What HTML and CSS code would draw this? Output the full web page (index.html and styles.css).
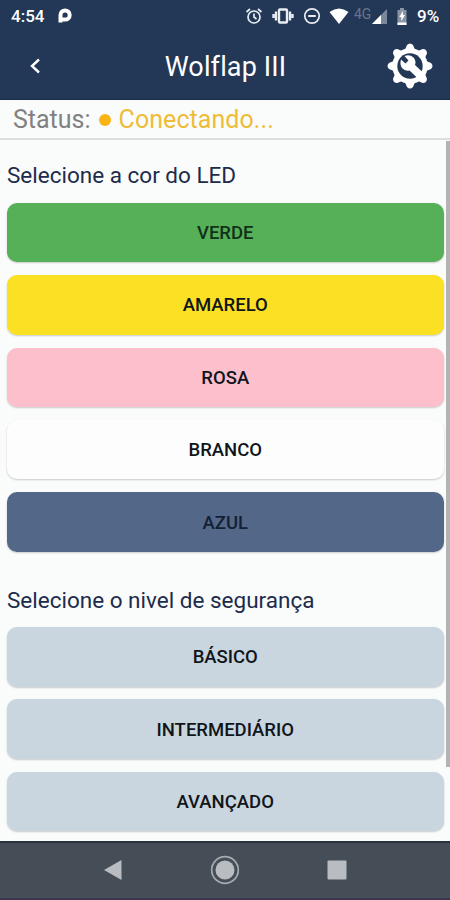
FILE: index.html
```html
<!DOCTYPE html>
<html lang="pt">
<head>
<meta charset="utf-8">
<title>Wolflap III</title>
<link rel="stylesheet" href="styles.css">
</head>
<body>
<div class="phone">
  <header class="header">
    <div class="system-bar">
      <span class="clock">4:54</span>
      <svg class="parking" width="14" height="16" viewBox="0 0 14 16"><path d="M2.500 14.500V7a4.600 4.600 0 1 1 4.600 4.600H4" fill="none" stroke="#fff" stroke-width="4" stroke-linejoin="round"/></svg>
      <div class="indicators">
        <svg width="18" height="18" viewBox="0 0 18 18" fill="none" stroke="#e8edf4" stroke-width="1.700"><circle cx="9" cy="10" r="6"/><path d="M1.500 5 5 2M16.500 5 13 2M9 6.500V10l2.500 2"/></svg>
        <svg width="22" height="18" viewBox="0 0 22 18" fill="none" stroke="#e8edf4" stroke-width="2.400"><rect x="7" y="2.500" width="8" height="13" rx="1"/><path d="M4 4.500v9M1.500 7v4M18 4.500v9M20.500 7v4"/></svg>
        <svg width="18" height="18" viewBox="0 0 18 18" fill="none" stroke="#e8edf4" stroke-width="1.700"><circle cx="9" cy="9" r="7.200"/><path d="M5.200 9h7.600" stroke-width="2"/></svg>
        <svg width="20" height="18" viewBox="0 0 20 18"><path d="M.5 5Q10-2 19.500 5L10 17Z" fill="#fff"/></svg>
        <span class="network">4G</span>
        <svg class="signal" width="15" height="15" viewBox="0 0 15 15"><path d="M15 0v15H0Z" fill="#7b889c"/><path d="M9 6v9H0Z" fill="#fff"/></svg>
        <svg class="battery" width="10" height="17" viewBox="0 0 10 17"><path d="M3 0h4v2h2.500v15H.5V2H3Z" fill="#8995a6"/><path d="M.5 14.500h9V17h-9ZM6 3 2.300 9h2v4L8 7H6Z" fill="#fff"/></svg>
        <span class="percent">9%</span>
      </div>
    </div>
    <div class="title-bar">
      <svg class="back" width="12" height="16" viewBox="0 0 12 16"><path d="M10 1.500 3 8l7 6.500" fill="none" stroke="#fff" stroke-width="2.400"/></svg>
      <h1>Wolflap III</h1>
      <svg class="settings" width="46" height="46" viewBox="-23 -23 46 46">
        <g fill="#fff">
          <circle r="17.800"/>
          <g id="teeth"><path id="tooth" d="M-5.500-15-3-21Q0-24 3-21l2.500 6v30L3 21Q0 24-3 21l-2.500-6Z"/><use href="#tooth" transform="rotate(90)"/></g>
          <use href="#teeth" transform="rotate(45)"/>
        </g>
        <circle r="12.700" fill="#233756"/>
        <path d="M-9-6.500-4.500-2.500-1.500-5.500-5.500-10Q-.5-12 3.500-8.500 6.500-5 5-1L14.500 8 9 13.500-.5 4.500Q-5 5.500-8 2-10.500-1.500-9-6.500Z" fill="#fff"/>
      </svg>
    </div>
  </header>
  <div class="status"><span>Status:</span><i class="dot"></i><span class="connecting">Conectando...</span></div>
  <main class="content">
    <div class="options">
      <section>
        <h2>Selecione a cor do LED</h2>
        <div class="choices">
          <button class="green">VERDE</button>
          <button class="yellow">AMARELO</button>
          <button class="pink">ROSA</button>
          <button class="white">BRANCO</button>
          <button class="blue">AZUL</button>
        </div>
      </section>
      <section>
        <h2>Selecione o nivel de segurança</h2>
        <div class="choices">
          <button>BÁSICO</button>
          <button>INTERMEDIÁRIO</button>
          <button>AVANÇADO</button>
        </div>
      </section>
    </div>
    <div class="scrollbar"></div>
  </main>
  <nav class="nav">
    <svg width="20" height="22" viewBox="0 0 20 22"><path d="M1 11 18.500 1v20Z" fill="#b9bdc1"/></svg>
    <svg width="30" height="30" viewBox="0 0 30 30"><circle cx="15" cy="15" r="13.300" fill="none" stroke="#a6abb0" stroke-width="1.700"/><circle cx="15" cy="15" r="9.500" fill="#b9bdc1"/></svg>
    <svg width="20" height="20" viewBox="0 0 20 20"><rect x=".5" y=".5" width="19" height="19" rx="1" fill="#b9bdc1"/></svg>
  </nav>
</div>
</body>
</html>
```
FILE: styles.css
```css
* { box-sizing: border-box; }
body { margin: 0; font-family: Roboto, sans-serif; }
.phone { width: 450px; height: 900px; display: flex; flex-direction: column; background: #fafbfb; overflow: hidden; }
svg { display: block; flex: none; }
.header { height: 100px; background: #233756; color: #fff; border-bottom: 1px solid #172b49; }
.system-bar { height: 32px; display: flex; align-items: center; padding: 0 10px 0 11px; }
.clock { font-size: 17px; font-weight: 500; width: 47px; }
.indicators { margin-left: auto; display: flex; align-items: center; }
.indicators svg:nth-child(2) { margin-left: 9px; }
.indicators svg:nth-child(3) { margin-left: 9px; }
.indicators svg:nth-child(4) { margin-left: 8px; }
.network { font-size: 14px; width: 18px; margin-left: 5px; color: #66758b; transform: translateY(-2px); }
.indicators .battery { margin-left: 10px; }
.percent { font-size: 17px; font-weight: 500; margin-left: 10px; width: 23px; white-space: nowrap; }
.title-bar { height: 68px; display: grid; grid-template-columns: 60px 1fr 60px; align-items: center; padding-right: 2px; }
.back { margin-left: 29px; }
h1 { margin: 0; text-align: center; font-size: 27px; font-weight: 400; letter-spacing: .15px; padding: 1px 0 0 3px; white-space: nowrap; }
.settings { justify-self: center; margin-left: -17px; }
.status { height: 40px; padding: 1px 13px 0; display: flex; align-items: center; border-bottom: 2px solid #dedede; font-size: 25px; color: #818181; }
.dot { width: 12px; height: 12px; border-radius: 50%; background: #fcb415; margin: 1px 8px 0 8px; }
.connecting { color: #eebd37; letter-spacing: .07px; }
.content { height: 701px; display: flex; }
.options { width: 446px; padding: 22px 3px 0 7px; }
h2 { margin: 0; height: 26px; line-height: 26px; font-size: 22.500px; font-weight: 400; color: #202b4c; white-space: nowrap; }
.choices { margin-top: 14.800px; display: flex; flex-direction: column; gap: 12.900px; }
section + section { margin-top: 35.200px; }
section + section .choices { margin-top: 14px; }
button { width: 436.500px; height: 59.500px; border: 0; border-radius: 10px; padding: 1px 0 0; font: 500 18.500px Roboto, sans-serif; color: #10151a; background: #c9d6df; box-shadow: 0 1px 2px #0003; }
.green { background: #55b058; color: #12301a; }
.yellow { background: #fbe023; }
.pink { background: #fdbfcc; }
.white { background: #fdfdfd; }
.blue { background: #536789; color: #142033; }
.scrollbar { width: 4px; height: 626px; background: #b3b3b3; margin-top: 1px; }
.nav { height: 59px; display: flex; align-items: center; justify-content: space-between; padding: 0 103px 1px; background: #454d57; border-top: 2px solid #29343c; border-bottom: 2px solid #3c3550; }
```
